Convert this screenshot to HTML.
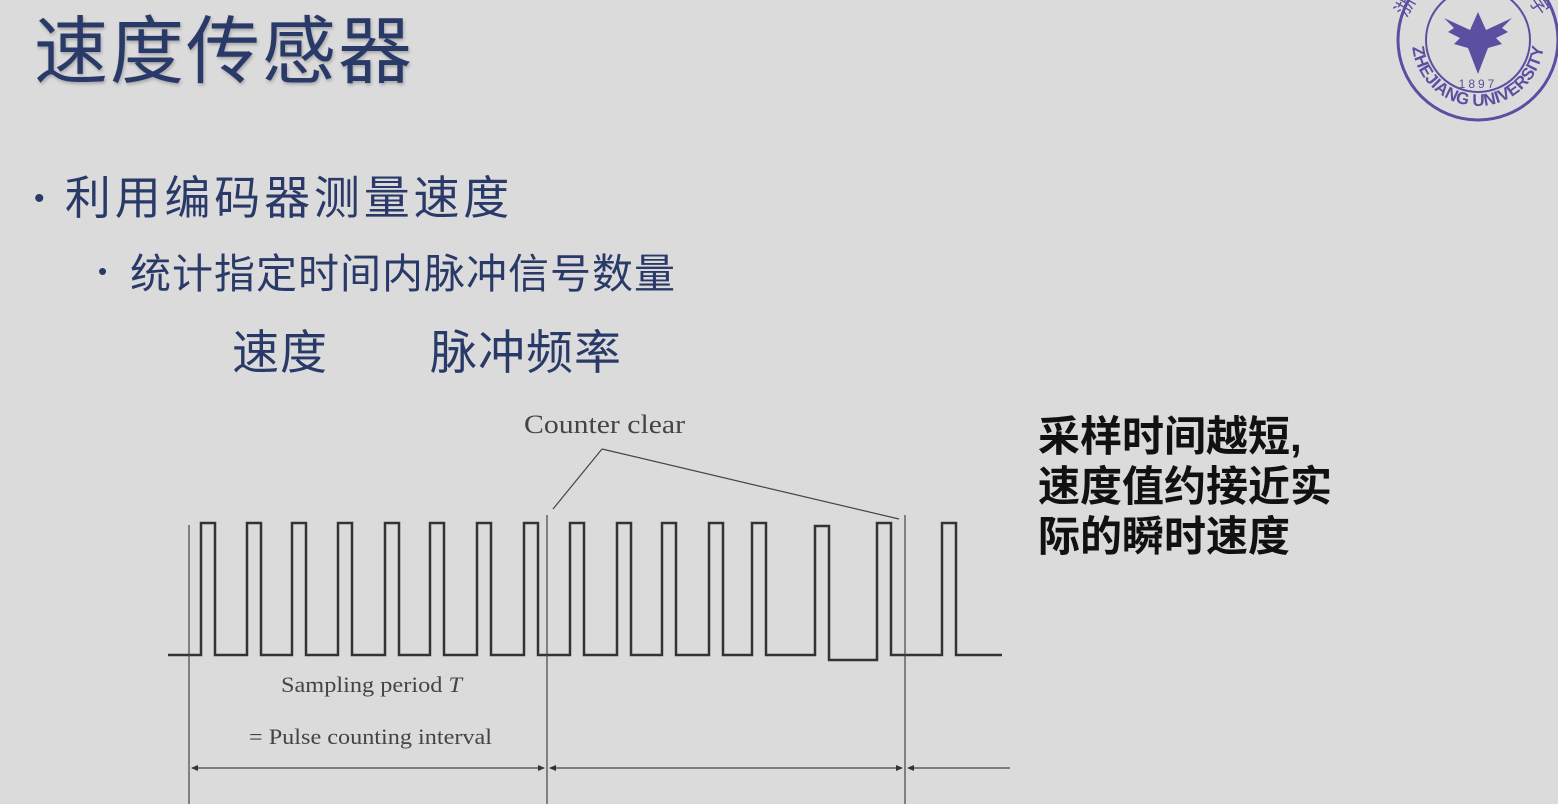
<!DOCTYPE html>
<html><head><meta charset="utf-8"><style>
html,body{margin:0;padding:0}
body{width:1558px;height:804px;background:#dcdbdc;position:relative;overflow:hidden;font-family:"Liberation Sans","Noto Sans CJK SC",sans-serif}
.t{position:absolute;white-space:nowrap;line-height:1}
.blue{color:#2a3a68}
</style></head><body>
<div class="t blue" style="left:34px;top:15px;font-size:74px;letter-spacing:2px;text-shadow:1px 2px 3px rgba(0,0,0,.25)">速度传感器</div>
<div class="t blue" style="left:34px;top:175px;font-size:46px;letter-spacing:3.8px"><span style="font-size:30px;position:relative;top:-6px">•</span> 利用编码器测量速度</div>
<div class="t blue" style="left:98px;top:258px;font-size:26px">•</div>
<div class="t blue" style="left:130px;top:254px;font-size:41px;letter-spacing:1px">统计指定时间内脉冲信号数量</div>
<div class="t blue" style="left:232px;top:329px;font-size:47px;letter-spacing:1px">速度</div>
<div class="t blue" style="left:430px;top:329px;font-size:47px;letter-spacing:1px">脉冲频率</div>
<div class="t" style="left:1038px;top:412px;font-size:42px;font-weight:bold;color:#111;line-height:50px">采样时间越短,<br>速度值约接近实<br>际的瞬时速度</div>
<svg width="1558" height="804" style="position:absolute;left:0;top:0">
<g fill="none" stroke="#333" stroke-width="2.5">
<path d="M168 655 H201 V523 H215 V655 H247 V523 H261 V655 H292 V523 H306 V655 H338 V523 H352 V655 H385 V523 H399 V655 H430 V523 H444 V655 H477 V523 H491 V655 H524 V523 H538 V655 H570 V523 H584 V655 H617 V523 H631 V655 H662 V523 H676 V655 H709 V523 H723 V655 H752 V523 H766 V655 H815 V526 H829 V660 H877 V523 H891 V655 H942 V523 H956 V655 H1002"/>
</g>
<g stroke="#444" stroke-width="1.2" fill="none">
<line x1="189" y1="525" x2="189" y2="804"/>
<line x1="547" y1="515" x2="547" y2="804"/>
<line x1="905" y1="515" x2="905" y2="804"/>
<line x1="602" y1="449" x2="553" y2="509"/>
<line x1="602" y1="449" x2="899" y2="519"/>
<line x1="192" y1="768" x2="544" y2="768"/>
<line x1="550" y1="768" x2="902" y2="768"/>
<line x1="908" y1="768" x2="1010" y2="768"/>
</g>
<g fill="#333">
<path d="M191 768 l7 -3 v6z"/><path d="M545 768 l-7 -3 v6z"/>
<path d="M549 768 l7 -3 v6z"/><path d="M903 768 l-7 -3 v6z"/>
<path d="M907 768 l7 -3 v6z"/>
</g>
<g font-family="Liberation Serif,serif" fill="#444">
<text x="524" y="433" font-size="26" textLength="161" lengthAdjust="spacingAndGlyphs">Counter clear</text>
<text x="281" y="692" font-size="22" textLength="181" lengthAdjust="spacingAndGlyphs">Sampling period <tspan font-style="italic">T</tspan></text>
<text x="249" y="744" font-size="22" textLength="243" lengthAdjust="spacingAndGlyphs">= Pulse counting interval</text>
</g>
<g transform="translate(1478,40)" stroke="#5a4fa0" fill="none">
<defs><path id="arc" d="M-66 0 A66 66 0 0 0 66 0"/></defs>
<circle r="80" stroke-width="3"/>
<circle r="52" stroke-width="2"/>
<path d="M-34 -22 L-24 -12 L-30 -8 L-18 -2 L-24 4 L-10 8 L0 34 L10 8 L24 4 L18 -2 L30 -8 L24 -12 L34 -22 L8 -10 L0 -28 L-8 -10Z" fill="#5a4fa0" stroke="none"/>
<text x="0" y="48" font-size="12" fill="#5a4fa0" stroke="none" text-anchor="middle" font-family="Liberation Sans" letter-spacing="3">1897</text>
<text font-size="17" fill="#5a4fa0" stroke="none" font-family="Liberation Sans" font-weight="bold"><textPath href="#arc" startOffset="50%" text-anchor="middle">ZHEJIANG UNIVERSITY</textPath></text>
<text x="-72" y="-22" font-size="20" fill="#5a4fa0" stroke="none" font-family="Noto Sans CJK SC" transform="rotate(-60 -72 -22)">浙</text>
<text x="50" y="-40" font-size="20" fill="#5a4fa0" stroke="none" font-family="Noto Sans CJK SC" transform="rotate(55 50 -40)">学</text>
</g>
</svg>
</body></html>
